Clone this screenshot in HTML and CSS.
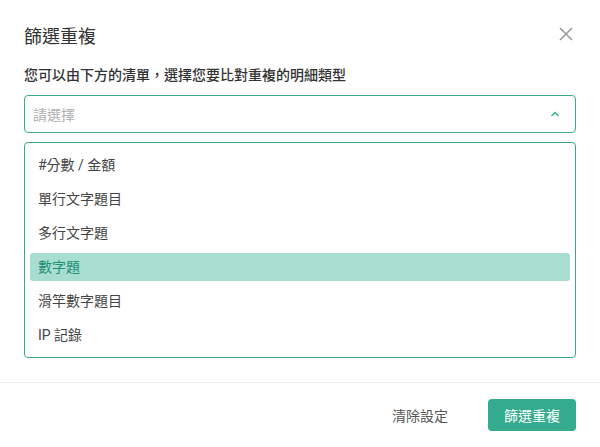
FILE: index.html
```html
<!DOCTYPE html>
<html lang="zh-Hant">
<head>
<meta charset="utf-8">
<title>篩選重複</title>
<link rel="stylesheet" href="styles.css">
</head>
<body>
<div class="dialog">
  <div class="header">
    <h2 class="title">篩選重複</h2>
    <button class="close" aria-label="關閉">
      <svg width="14" height="14" viewBox="0 0 14 14"><path d="M1 1 L13 13 M13 1 L1 13" stroke="#9a9a9a" stroke-width="1.6" fill="none"/></svg>
    </button>
  </div>
  <div class="body">
    <p class="desc">您可以由下方的清單，選擇您要比對重複的明細類型</p>
    <div class="select">
      <span class="placeholder">請選擇</span>
      <svg class="chevron" width="10" height="6" viewBox="0 0 10 6"><path d="M1.5 5 L5 1.5 L8.5 5" stroke="#3aa98e" stroke-width="1.4" fill="none"/></svg>
    </div>
    <ul class="options">
      <li class="option">#分數 / 金額</li>
      <li class="option">單行文字題目</li>
      <li class="option">多行文字題</li>
      <li class="option active">數字題</li>
      <li class="option">滑竿數字題目</li>
      <li class="option">IP 記錄</li>
    </ul>
  </div>
  <div class="footer">
    <button class="btn-text">清除設定</button>
    <button class="btn-primary">篩選重複</button>
  </div>
</div>
</body>
</html>
```

FILE: styles.css
```css
* { box-sizing: border-box; }
html, body {
  margin: 0;
  padding: 0;
  background: #fff;
}
body {
  font-family: Roboto, "Noto Sans CJK TC", "Noto Sans", sans-serif;
  color: #333;
  width: 600px;
  height: 447px;
  overflow: hidden;
}
.dialog {
  display: flex;
  flex-direction: column;
}
.header {
  display: flex;
  justify-content: space-between;
  align-items: flex-start;
  padding: 25px 24px 0 24px;
}
.title {
  margin: 0;
  font-size: 18px;
  line-height: 24px;
  font-weight: 400;
  color: #333;
}
.close {
  width: 20px;
  height: 20px;
  margin-top: -1px;
  padding: 0;
  border: 0;
  background: none;
  display: flex;
  align-items: center;
  justify-content: center;
}
.body {
  padding: 16px 24px 24px 24px;
  display: flex;
  flex-direction: column;
}
.desc {
  margin: 0 0 10px 0;
  font-size: 14px;
  line-height: 20px;
  font-weight: 500;
  color: #333;
}
.select {
  height: 38px;
  border: 1px solid #3aa98e;
  border-radius: 4px;
  display: flex;
  align-items: center;
  justify-content: space-between;
  padding: 0 15px 0 8px;
}
.placeholder {
  font-size: 14px;
  color: #b0b0b0;
}
.chevron { display: block; margin-top: -1px; }
.options {
  list-style: none;
  margin: 9px 0 0 0;
  padding: 8px 5px;
  border: 1px solid #3aa98e;
  border-radius: 4px;
  display: flex;
  flex-direction: column;
  gap: 6px;
}
.option {
  height: 28px;
  line-height: 28px;
  padding-left: 8px;
  font-size: 14px;
  color: #444;
  border-radius: 3px;
}
.option.active {
  background: #a8ddd2;
  color: #1f8e72;
}
.footer {
  border-top: 1px solid #ececec;
  padding: 16px 24px 16px 24px;
  display: flex;
  justify-content: flex-end;
  align-items: center;
  gap: 24px;
}
.btn-text {
  font-family: inherit;
  font-size: 14px;
  color: #555;
  background: none;
  border: 0;
  padding: 0 16px;
  height: 32px;
}
.btn-primary {
  font-family: inherit;
  font-size: 14px;
  color: #fff;
  background: #34ab8e;
  border: 0;
  border-radius: 4px;
  height: 32px;
  width: 88px;
  padding: 0;
}
```
